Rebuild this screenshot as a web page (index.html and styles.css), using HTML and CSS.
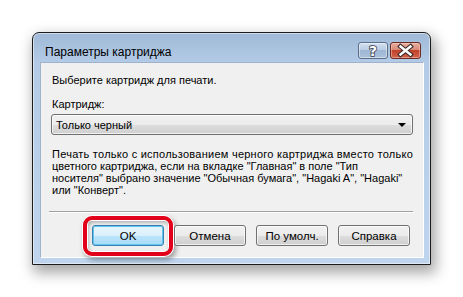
FILE: index.html
```html
<!DOCTYPE html>
<html>
<head>
	<title>Параметры картриджа</title>
	<link rel="stylesheet" href="styles.css">
</head>
<body>

<div class="dialog">
	<div class="titlebar">
		<span class="title">Параметры картриджа</span>
		<div class="caption-btns">
			<span class="cap-btn help">
				<svg width="28" height="15" viewBox="0 0 28 15">
					<text x="14" y="13" text-anchor="middle" class="qmark">?</text>
				</svg>
			</span>
			<span class="cap-btn close">
				<svg width="29" height="15" viewBox="0 0 29 15">
					<path d="M9.5 3.5 L19.5 11.5 M19.5 3.5 L9.5 11.5" stroke="#3a2a2a" stroke-width="4.6" stroke-linecap="square" fill="none"/>
					<path d="M9.5 3.5 L19.5 11.5 M19.5 3.5 L9.5 11.5" stroke="#fff" stroke-width="2.4" stroke-linecap="square" fill="none"/>
				</svg>
			</span>
		</div>
	</div>

	<div class="client">
		<p class="intro">Выберите картридж для печати.</p>
		<div class="label">Картридж:</div>
		<div class="combo">
			<span>Только черный</span>
			<span class="arrow"></span>
		</div>
		<p class="desc"><span class="wide">Печать только с использованием черного картриджа вместо только</span><br>цветного картриджа, если на вкладке "Главная" в поле "Тип<br>носителя" выбрано значение "Обычная бумага", "Hagaki A", "Hagaki"<br>или "Конверт".</p>
		<div class="sep"></div>
		<div class="buttons">
			<button class="btn default">OK<span class="highlight"></span></button>
			<button class="btn">Отмена</button>
			<button class="btn">По умолч.</button>
			<button class="btn">Справка</button>
		</div>
	</div>
</div>

</body>
</html>
```

FILE: styles.css
```css
html, body {
	margin: 0;
	padding: 0;
	background-color: #fff;
}

body {
	width: 463px;
	height: 297px;
	overflow: hidden;
	font-family: "Liberation Sans", Arial, sans-serif;
	font-size: 11px;
	color: #000;
}

.dialog {
	box-sizing: border-box;
	width: 399px;
	height: 233px;
	margin: 32px 0 0 32px;
	padding: 0 6px 6px 7px;
	border: 1px solid #1c1c1c;
	border-radius: 7px 7px 0 0;
	background: linear-gradient(to bottom, #9fb9d7 0px, #b3cbe6 30px, #bfd5ed 100%);
	box-shadow: 3px 6px 14px 2px rgba(0, 0, 0, 0.35), inset 0 0 0 1px rgba(255, 255, 255, 0.5);
}

.titlebar {
	height: 29px;
	display: flex;
	justify-content: space-between;
	align-items: flex-start;
}

.title {
	font-family: "Liberation Sans", Arial, sans-serif;
	font-size: 12px;
	padding: 12px 0 0 5px;
	color: #000;
}

.caption-btns {
	display: flex;
	gap: 2px;
	margin: 9px 3px 0 0;
}

.cap-btn {
	display: block;
	height: 15px;
	border-radius: 3px;
}

.cap-btn svg {
	display: block;
}

.help {
	width: 28px;
	border: 1px solid #5d6f88;
	background: linear-gradient(to bottom, #d2e0f0 0%, #b9cde3 45%, #9fb7d3 50%, #a9c1dc 100%);
	box-shadow: inset 0 0 0 1px rgba(255, 255, 255, 0.45);
}

.qmark {
	font-family: "DejaVu Sans", sans-serif;
	font-weight: bold;
	font-size: 14px;
	fill: #fff;
	stroke: #3a3a48;
	stroke-width: 1.6px;
	paint-order: stroke;
}

.close {
	width: 29px;
	border: 1px solid #6b2a22;
	background: linear-gradient(to bottom, #e9ab9c 0%, #d98b78 45%, #c2412b 50%, #d0634b 100%);
	box-shadow: inset 0 0 0 1px rgba(255, 220, 210, 0.45);
}

.client {
	box-sizing: border-box;
	height: 196px;
	padding: 0 10px 0 11px;
	background-color: #f0f0f0;
	border: 1px solid #9fb4cc;
	border-bottom-color: #fff;
	border-right-color: #fff;
	white-space: nowrap;
}

.intro {
	margin: 11px 0 0 0;
	line-height: 13px;
}

.label {
	margin-top: 11px;
	line-height: 13px;
}

.combo {
	box-sizing: border-box;
	height: 21px;
	margin-top: 3px;
	margin-left: -1px;
	padding: 0 6px 0 4px;
	display: flex;
	align-items: center;
	justify-content: space-between;
	border: 1px solid #707070;
	border-radius: 3px;
	background: linear-gradient(to bottom, #f2f2f2 0%, #ebebeb 50%, #dddddd 51%, #cfcfcf 100%);
	box-shadow: inset 0 0 0 1px rgba(255, 255, 255, 0.7);
}

.arrow {
	width: 0;
	height: 0;
	border-left: 4px solid transparent;
	border-right: 4px solid transparent;
	border-top: 4px solid #000;
}

.desc {
	margin: 13px 0 0 0;
	line-height: 12px;
}

.desc .wide {
	letter-spacing: 0.25px;
}

.sep {
	margin: 15px 0 0 -3px;
	height: 0;
	border-top: 1px solid #a0a0a0;
	border-bottom: 1px solid #fff;
}

.buttons {
	display: flex;
	justify-content: flex-end;
	gap: 10px;
	margin-top: 12px;
	padding-right: 3px;
}

.btn {
	position: relative;
	box-sizing: border-box;
	width: 72px;
	height: 21px;
	padding: 0;
	font-family: "Liberation Sans", Arial, sans-serif;
	font-size: 11.5px;
	color: #000;
	border: 1px solid #707070;
	border-radius: 3px;
	background: linear-gradient(to bottom, #f2f2f2 0%, #ebebeb 50%, #dddddd 51%, #cfcfcf 100%);
	box-shadow: inset 0 0 0 1px rgba(255, 255, 255, 0.7);
}

.btn.default {
	border-color: #3c7fb1;
	background: linear-gradient(to bottom, #eaf6fd 0%, #d9f0fc 50%, #bee6fd 51%, #a7d9f5 100%);
	box-shadow: inset 0 0 0 1px #5fc8f0;
}

/* red marker drawn over the OK button */
.highlight {
	position: absolute;
	left: -10px;
	top: -10px;
	right: -10px;
	bottom: -11px;
	border: 4px solid #e3001b;
	border-radius: 9px;
	box-shadow: 0 0 0 1px #fff, 2px 3px 5px 1px rgba(0, 0, 0, 0.35), inset 0 0 0 1px #fff, inset 1px 2px 4px rgba(0, 0, 0, 0.35);
	pointer-events: none;
}
```
